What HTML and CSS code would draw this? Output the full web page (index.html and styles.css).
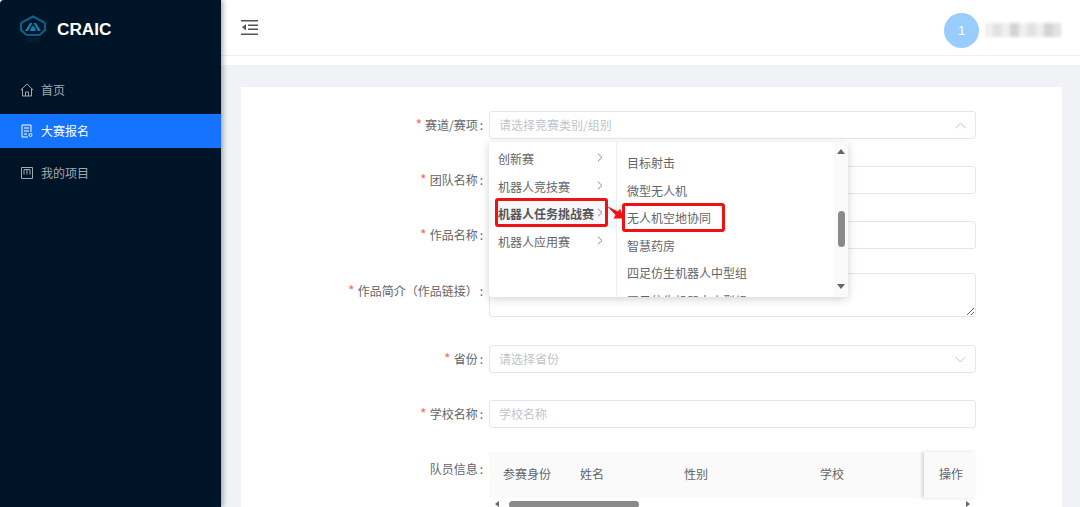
FILE: index.html
```html
<!DOCTYPE html>
<html lang="zh-CN">
<head>
<meta charset="utf-8">
<title>CRAIC</title>
<link rel="stylesheet" href="styles.css">
</head>
<body>
<div class="app">
  <aside class="sidebar">
    <div class="brand">
      <svg class="logo" width="28" height="30" viewBox="0 0 28 30">
        <path d="M2 9 14 2.500 26 9M2 9v7l5.500 5M26 9v7l-5.500 5M7.500 21h13" fill="none" stroke="#0b5f88" stroke-width="2.200"/>
        <path d="M6 17 11 9h2.500L9 17zM22 17 17 9h-2.500L19 17zM12 14l2-2.500 2 2.500 1 3H11z" fill="#1180ac"/>
        <text x="14" y="28" text-anchor="middle" class="logo-text">CRAIC</text>
      </svg>
      <span class="brand-name">CRAIC</span>
    </div>
    <nav class="menu">
      <a class="menu-item">
        <svg width="14" height="14" viewBox="0 0 14 14" fill="none" stroke="currentColor"><path d="M.8 7 7 1l6.200 6M2.500 5.800V13h9V5.800M5.500 13V9h3v4"/></svg>
        <span>首页</span>
      </a>
      <a class="menu-item active">
        <svg width="14" height="14" viewBox="0 0 14 14" fill="none" stroke="currentColor"><path d="M8 13H2V1h9v7M4 4h5M4 7h5M4 10h3"/><circle cx="10.500" cy="11" r="1.500"/></svg>
        <span>大赛报名</span>
      </a>
      <a class="menu-item">
        <svg width="14" height="14" viewBox="0 0 14 14" fill="none" stroke="currentColor"><path d="M1.500 1.500h11v11h-11zM4 3.500v5M7 3.500v5M10 3.500v5M4 3.500h6"/></svg>
        <span>我的项目</span>
      </a>
    </nav>
  </aside>
  <div class="main">
    <header class="topbar">
      <svg class="fold" width="17" height="15" viewBox="0 0 17 15" fill="#555"><path d="M0 0h17v1.500H0zM7 4.500h10V6H7zM7 8.500h10V10H7zM0 13.500h17V15H0zM5 4v6.500L1 7.200z"/></svg>
      <div class="user">
        <div class="avatar">1</div>
        <div class="blurname">
          <i class="b1"></i><i class="b2"></i><i class="b1"></i><i class="b3"></i><i class="b1"></i><i class="b2"></i><i class="b1"></i><i class="b3"></i><i class="b2"></i>
        </div>
      </div>
    </header>
    <div class="subbar"></div>
    <div class="content">
      <form class="card">
        <div class="row">
          <label class="label"><em>*</em>赛道/赛项<span class="colon">:</span></label>
          <div class="field select open"><input class="input" placeholder="请选择竞赛类别/组别" readonly>
            <svg class="caret" width="11" height="7" viewBox="0 0 11 7" fill="none" stroke="#c0c4cc"><path d="M.5 6.300 5.500 1l5 5.300"/></svg>
          </div>
        </div>
        <div class="row">
          <label class="label"><em>*</em>团队名称<span class="colon">:</span></label>
          <div class="field"><input class="input"></div>
        </div>
        <div class="row tight">
          <label class="label"><em>*</em>作品名称<span class="colon">:</span></label>
          <div class="field"><input class="input"></div>
        </div>
        <div class="row loose">
          <label class="label area"><em>*</em>作品简介（作品链接）<span class="colon">:</span></label>
          <div class="field"><textarea class="textarea"></textarea></div>
        </div>
        <div class="row">
          <label class="label"><em>*</em>省份<span class="colon">:</span></label>
          <div class="field select"><input class="input" placeholder="请选择省份" readonly>
            <svg class="caret" width="11" height="7" viewBox="0 0 11 7" fill="none" stroke="#c0c4cc"><path d="M.5.700 5.500 6l5-5.300"/></svg>
          </div>
        </div>
        <div class="row tight">
          <label class="label"><em>*</em>学校名称<span class="colon">:</span></label>
          <div class="field"><input class="input" placeholder="学校名称"></div>
        </div>
        <div class="row">
          <label class="label tall">队员信息<span class="colon">:</span></label>
          <div class="field table">
            <div class="thead">
              <span class="th c1">参赛身份</span>
              <span class="th c2">姓名</span>
              <span class="th c3">性别</span>
              <span class="th c4">学校</span>
              <span class="th c5">操作</span>
            </div>
            <div class="hscroll">
              <span class="tri tri-left"></span>
              <span class="hthumb"></span>
              <span class="tri tri-right"></span>
            </div>
          </div>
        </div>
      </form>
    </div>
  </div>

  <div class="cascader">
    <ul class="cas-left">
      <li>创新赛<svg class="chev" width="6" height="9" viewBox="0 0 6 9" fill="none" stroke="#888"><path d="m1 .8 4 3.700-4 3.700"/></svg></li>
      <li>机器人竞技赛<svg class="chev" width="6" height="9" viewBox="0 0 6 9" fill="none" stroke="#888"><path d="m1 .8 4 3.700-4 3.700"/></svg></li>
      <li class="sel">机器人任务挑战赛<svg class="chev" width="6" height="9" viewBox="0 0 6 9" fill="none" stroke="#888"><path d="m1 .8 4 3.700-4 3.700"/></svg></li>
      <li>机器人应用赛<svg class="chev" width="6" height="9" viewBox="0 0 6 9" fill="none" stroke="#888"><path d="m1 .8 4 3.700-4 3.700"/></svg></li>
    </ul>
    <ul class="cas-right">
      <li>目标射击</li>
      <li>微型无人机</li>
      <li>无人机空地协同</li>
      <li>智慧药房</li>
      <li>四足仿生机器人中型组</li>
      <li>四足仿生机器人小型组</li>
    </ul>
    <div class="vscroll">
      <span class="tri tri-up"></span>
      <span class="vthumb"></span>
      <span class="tri tri-down"></span>
    </div>
  </div>

  <div class="mark mark-left"></div>
  <div class="mark mark-right"></div>
  <svg class="mark-arrow" width="18" height="14" viewBox="0 0 18 14"><path d="M0 0 11 5.500 13 2.500 17 12.500 6.500 12.500 8.500 9z" fill="#f01212"/></svg>
</div>
</body>
</html>
```

FILE: styles.css
```css
* { box-sizing: border-box; }
html, body { margin: 0; height: 100%; overflow: hidden; background: #fff; }
body { font: 12px/1.5 "Noto Sans CJK SC", "Liberation Sans", sans-serif; color: #63656a; }
ul { list-style: none; margin: 0; padding: 0; }

.app { display: flex; width: 1080px; height: 507px; overflow: hidden; position: relative; }

.sidebar { flex: 0 0 221px; background: #001427; border-top-left-radius: 4px; box-shadow: 2px 0 5px rgba(0, 21, 41, .35); position: relative; z-index: 2; }
.brand { display: flex; align-items: flex-start; gap: 10px; height: 72.500px; padding: 14px 0 0 19px; }
.logo { display: block; }
.logo-text { font: 700 4.500px "Liberation Sans", sans-serif; fill: #0a2c44; }
.brand-name { font: 700 17.200px/30px "Liberation Sans", sans-serif; color: #fff; }
.menu { display: flex; flex-direction: column; }
.menu-item { display: flex; align-items: center; gap: 7px; height: 34px; padding-left: 20px; margin-bottom: 7.500px; color: #a3a9b0; font-size: 12px; }
.menu-item.active { background: #1473ff; color: #fff; }

.main { flex: 1; min-width: 0; display: flex; flex-direction: column; background: #f0f2f5; }
.topbar { height: 56px; flex: none; background: #fff; border-bottom: 1px solid #efefef; display: flex; align-items: center; justify-content: space-between; padding: 0 19px 0 20px; }
.user { display: flex; align-items: center; gap: 6px; padding-top: 5px; }
.avatar { width: 35px; height: 35px; border-radius: 50%; background: #99ccff; color: #fff; text-align: center; font: 13px/36px "Liberation Sans", sans-serif; }
.blurname { display: flex; width: 76px; height: 14px; filter: blur(1.500px); }
.blurname i { flex: 1; }
.b1 { background: #efefef; }
.b2 { background: #e2e2e2; }
.b3 { background: #d4d4d4; }
.subbar { height: 9px; flex: none; background: #fff; }

.content { flex: 1; min-height: 0; padding: 22px 18px 0 20px; overflow: hidden; }
.card { background: #fff; height: 100%; padding-top: 24px; overflow: hidden; }

.row { display: flex; gap: 6px; margin-bottom: 27px; }
.row.tight { margin-bottom: 24px; }
.row.loose { margin-bottom: 28px; }
.label { flex: 0 0 242px; height: 28px; text-align: right; line-height: 28px; color: #63656a; }
.label.tall { line-height: 34px; }
.label.area { line-height: 36px; }
.label em { color: #f56c6c; font-style: normal; font-size: 14px; line-height: 0; margin-right: 3px; }
.colon { margin-left: 2px; }
.field { flex: 0 0 487px; position: relative; }
.input { display: block; width: 100%; height: 28px; border: 1px solid #e4e6ea; border-radius: 3px; padding: 0 9px 2px; background: #fff; font: inherit; color: #63656a; outline: 0; }
.input::placeholder { color: #c0c4cc; }
.textarea { display: block; width: 100%; height: 44px; border: 1px solid #e4e6ea; border-radius: 3px; padding: 4px 9px; font: inherit; outline: 0; resize: vertical; }
.caret { position: absolute; right: 10px; top: 11px; }

.table { height: 56px; }
.thead { display: flex; height: 46px; background: #fafafa; color: #63656a; position: relative; }
.th { display: block; padding-left: 14px; flex: none; line-height: 44px; }
.c1 { width: 77px; }
.c2 { width: 104px; }
.c3 { width: 136px; }
.c4 { width: 118px; }
.c5 { width: 52px; padding-left: 15px; background: #fafafa; box-shadow: -2px 0 3px rgba(0, 0, 0, .14); }
.hscroll { display: flex; align-items: center; height: 10px; padding: 2px 6px 0 6px; gap: 10px; }
.hthumb { width: 130px; height: 7px; border-radius: 4px; background: #8a8a8a; }
.tri { display: block; width: 0; height: 0; border-style: solid; border-color: transparent; }
.tri-left { border-width: 3.500px 4px 3.500px 0; border-right-color: #666; }
.tri-right { border-width: 3.500px 0 3.500px 4px; border-left-color: #666; margin-left: auto; }

.cascader { position: absolute; left: 489px; top: 142px; width: 359px; height: 155px; background: #fff; box-shadow: 0 2px 10px rgba(0, 0, 0, .18); border-radius: 3px; display: flex; overflow: hidden; z-index: 3; color: #63656a; }
.cas-left { flex: 0 0 128px; border-right: 1px solid #eceef2; padding-top: 3px; }
.cas-left li { height: 27.500px; line-height: 27.500px; padding-left: 9px; display: flex; align-items: center; position: relative; }
.cas-left li.sel { background: #f5f7fa; font-weight: 700; color: #555; }
.chev { position: absolute; left: 108px; top: 8px; }
.cas-right { flex: 1; padding: 7px 0 0 10px; }
.cas-right li { height: 27.500px; line-height: 27.500px; }
.vscroll { flex: 0 0 14px; background: #fafafa; position: relative; display: flex; flex-direction: column; align-items: center; }
.vthumb { position: absolute; top: 69px; left: 4px; width: 7px; height: 36px; border-radius: 4px; background: #8a8a8a; }
.tri-up { position: absolute; top: 7px; border-width: 0 4.500px 5px; border-bottom-color: #666; }
.tri-down { position: absolute; top: 142px; border-width: 5px 4.500px 0; border-top-color: #666; }

.mark { position: absolute; border: 3px solid #f01212; border-radius: 3px; z-index: 4; }
.mark-left { left: 495px; top: 198px; width: 113px; height: 29px; }
.mark-right { left: 622px; top: 203px; width: 103px; height: 29px; }
.mark-arrow { position: absolute; left: 607px; top: 206px; z-index: 5; }
```
